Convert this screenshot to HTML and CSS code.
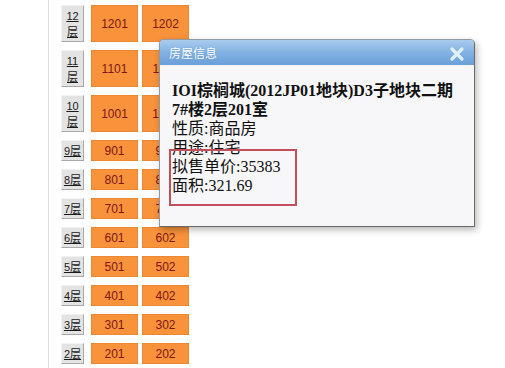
FILE: index.html
```html
<!DOCTYPE html>
<html lang="zh">
<head>
<meta charset="utf-8">
<title>房屋信息</title>
<link rel="stylesheet" href="styles.css">
</head>
<body>
<div class="page">
  <div class="building">
    <div class="row tall"><a class="floor">12<br>层</a><div class="unit">1201</div><div class="unit">1202</div></div>
    <div class="row tall"><a class="floor">11<br>层</a><div class="unit">1101</div><div class="unit">1102</div></div>
    <div class="row tall"><a class="floor">10<br>层</a><div class="unit">1001</div><div class="unit">1002</div></div>
    <div class="row"><a class="floor">9层</a><div class="unit">901</div><div class="unit">902</div></div>
    <div class="row"><a class="floor">8层</a><div class="unit">801</div><div class="unit">802</div></div>
    <div class="row"><a class="floor">7层</a><div class="unit">701</div><div class="unit">702</div></div>
    <div class="row"><a class="floor">6层</a><div class="unit">601</div><div class="unit">602</div></div>
    <div class="row"><a class="floor">5层</a><div class="unit">501</div><div class="unit">502</div></div>
    <div class="row"><a class="floor">4层</a><div class="unit">401</div><div class="unit">402</div></div>
    <div class="row"><a class="floor">3层</a><div class="unit">301</div><div class="unit">302</div></div>
    <div class="row"><a class="floor">2层</a><div class="unit">201</div><div class="unit">202</div></div>
  </div>

  <div class="dialog">
    <div class="dialog-title">
      <span class="dialog-caption">房屋信息</span>
      <svg class="dialog-close" width="16" height="16" viewBox="0 0 16 16" aria-hidden="true">
        <path d="M3 3 L13 13 M13 3 L3 13" stroke="#e2eef9" stroke-width="3.2" stroke-linecap="round" fill="none"/>
      </svg>
    </div>
    <div class="dialog-body">
      <div class="info-name">IOI棕榈城(2012JP01地块)D3子地块二期<br>7#楼2层201室</div>
      <div class="info-line">性质:商品房</div>
      <div class="info-line">用途:住宅</div>
      <div class="info-line">拟售单价:35383</div>
      <div class="info-line">面积:321.69</div>
    </div>
    <div class="highlight"></div>
  </div>
</div>
</body>
</html>
```

FILE: styles.css
```css
html, body {
  margin: 0;
  padding: 0;
  background: #ffffff;
}

.page {
  position: relative;
  width: 505px;
  height: 368px;
  overflow: hidden;
}

.building {
  margin-left: 48px;
  border-left: 1px solid #dcdcdc;
  height: 368px;
  padding: 5px 0 0 12px;
  box-sizing: border-box;
  display: flex;
  flex-direction: column;
  gap: 8px;
}

.row {
  display: flex;
  gap: 4px;
  height: 21px;
}

.row.tall {
  height: 37px;
}

.floor {
  width: 23px;
  margin-right: 3px;
  box-sizing: border-box;
  background: #e3e3e3;
  border: 1px solid;
  border-color: #f2f2f2 #a9a9a9 #a9a9a9 #f2f2f2;
  color: #1a1a1a;
  text-decoration: underline;
  font-family: "Liberation Sans", "Noto Sans CJK SC", sans-serif;
  font-size: 11px;
  line-height: 16px;
  display: flex;
  align-items: center;
  justify-content: center;
  text-align: center;
}

.unit {
  width: 47px;
  box-sizing: border-box;
  background: #f8923b;
  border: 1px solid #ea8735;
  color: #7e1616;
  font-family: "Liberation Sans", "DejaVu Sans", sans-serif;
  font-size: 12px;
  display: flex;
  align-items: center;
  justify-content: center;
}

.dialog {
  position: absolute;
  left: 159px;
  top: 39px;
  width: 316px;
  height: 188px;
  box-sizing: border-box;
  background: #f7f6f9;
  border: 1px solid #8f9aa6;
  border-right-color: #6b6b6b;
  border-bottom-color: #6b6b6b;
  border-radius: 5px 5px 0 0;
  box-shadow: 2px 3px 7px rgba(0, 0, 0, 0.28);
}

.dialog-title {
  height: 25px;
  border-radius: 4px 4px 0 0;
  background: linear-gradient(#a9cbee, #7eb0e2 55%, #6a9fd6);
  display: flex;
  align-items: center;
  justify-content: space-between;
  padding: 0 9px 0 9px;
}

.dialog-caption {
  color: #ffffff;
  font-family: "Noto Sans CJK SC", sans-serif;
  font-size: 12px;
  text-shadow: 0 0 1px rgba(60, 100, 150, 0.5);
}

.dialog-close {
  display: block;
  margin-top: 2px;
}

.dialog-body {
  padding: 16px 0 0 12px;
  font-family: "Liberation Serif", "Noto Sans CJK SC", serif;
  font-size: 16px;
  line-height: 19px;
  color: #111111;
}

.info-name {
  font-weight: bold;
}

.highlight {
  position: absolute;
  left: 9px;
  top: 109px;
  width: 128px;
  height: 57px;
  box-sizing: border-box;
  border: 2px solid #c24f5b;
}
```
